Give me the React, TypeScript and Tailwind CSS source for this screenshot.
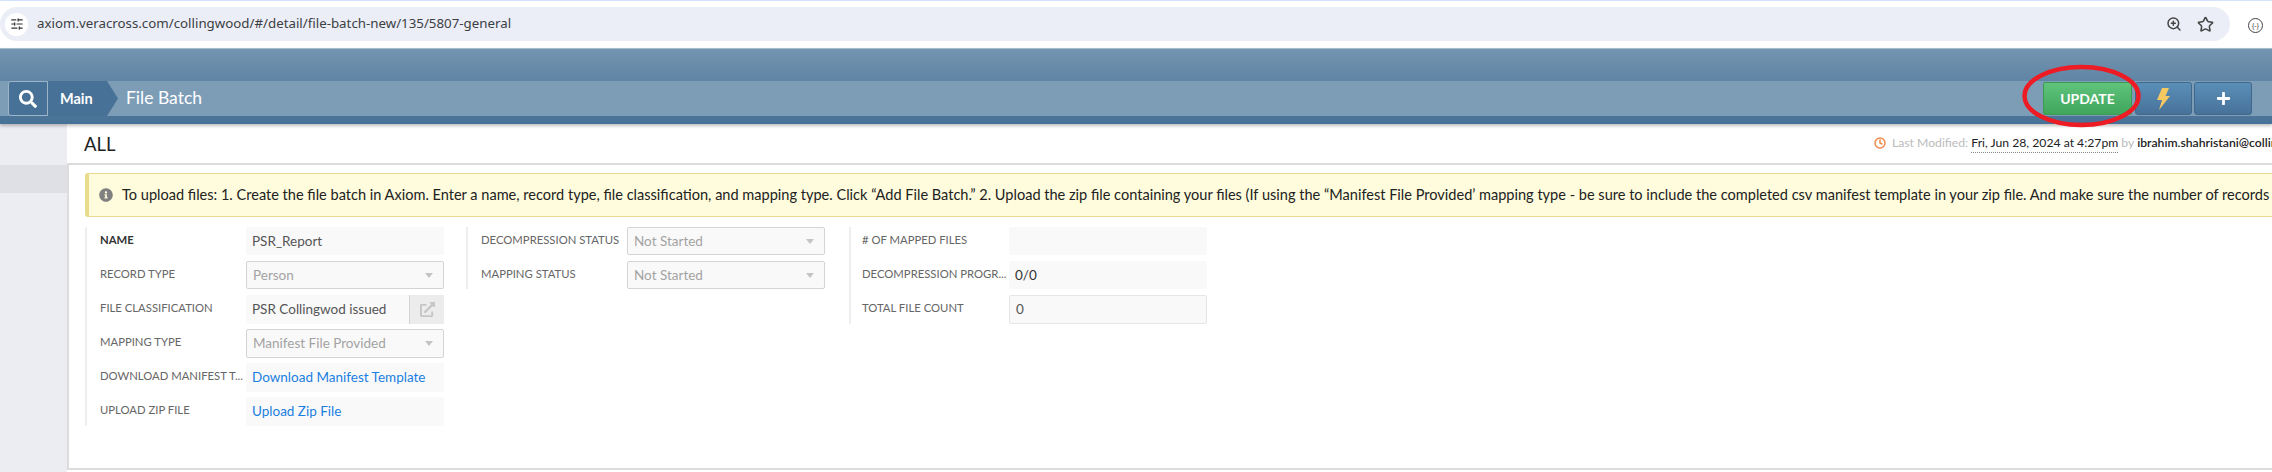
// File Batch detail page
import { Clock, Star, ZoomIn, SlidersHorizontal } from "lucide-react";
import { FaExternalLinkAlt, FaInfoCircle, FaPlus, FaSearch } from "react-icons/fa";

function Box({ children, className = "" }: { children?: React.ReactNode; className?: string }) {
  return (
    <div className={`flex h-full flex-1 items-center rounded-[2px] bg-[#f9f9f9] px-[6px] text-[13.5px] ${className}`}>
      {children}
    </div>
  );
}

function Select({ value }: { value: string }) {
  return (
    <Box className="justify-between border border-[#d4d4d4] text-[#a3a3a3]">
      <span>{value}</span>
      <span className="mr-[4px] h-0 w-0 border-x-[4px] border-t-[5px] border-x-transparent border-t-[#c4c4c4]" />
    </Box>
  );
}

function Row({ label, bold, tall, pull, wide, children }: { label: string; bold?: boolean; tall?: boolean; pull?: boolean; wide?: boolean; children: React.ReactNode }) {
  return (
    <div className={`flex items-start ${tall ? "h-[29px]" : "h-[28px]"} ${pull ? "-mt-[1px]" : ""}`}>
      <div className={`shrink-0 pt-[5px] text-[11.3px] leading-[16px] whitespace-nowrap ${wide ? "w-[147px]" : "w-[146px]"} ${bold ? "font-bold text-[#333]" : "text-[#666]"}`}>
        {label}
      </div>
      {children}
    </div>
  );
}

export default function App() {
  return (
    <div className="relative h-[472px] w-[2272px] overflow-hidden bg-white font-['Lato','Noto_Sans',sans-serif]">
      {/* Browser chrome */}
      <div className="h-[1px] bg-[#d3e3fd]" />
      <div className="flex h-[47px] items-start pt-[6px] font-['Noto_Sans',sans-serif]">
        <div className="flex h-[34px] w-[2230px] items-center rounded-full bg-[#ebeef7] pl-[5px] pr-[16px]">
          <div className="flex h-[23px] w-[23px] items-center justify-center rounded-full bg-white">
            <SlidersHorizontal className="h-[14px] w-[14px] text-[#333]" />
          </div>
          <span className="ml-[9px] flex-1 text-[13.3px] text-[#3c4043]">axiom.veracross.com/collingwood/#/detail/file-batch-new/135/5807-general</span>
          <ZoomIn className="h-[16px] w-[16px] text-[#444]" strokeWidth={2.2} />
          <Star className="ml-[15px] h-[17px] w-[17px] text-[#444]" strokeWidth={2.2} />
        </div>
        <div className="ml-[18px] mt-[11px] flex h-[15px] w-[15px] items-center justify-center rounded-full border border-[#444] text-[7px] leading-none text-[#444]">
          {"{-}"}
        </div>
      </div>

      {/* App header */}
      <div className="relative flex h-[76px] flex-col justify-end border-t border-[#a9bccb] bg-gradient-to-b from-[#7394b0] to-[#477196] pb-[8px] shadow-[0_2px_3px_rgba(0,0,0,0.25)]">
        <div className="flex h-[35px] items-center bg-[#7d9db7] pl-[8px] pr-[20px]">
          <div className="flex h-[35px] w-[40px] items-center justify-center rounded-l-[3px] border border-[#9db5c8] bg-[#477196]">
            <FaSearch className="h-[18px] w-[18px] text-white" />
          </div>
          <div className="flex h-[35px] w-[70px] items-center bg-[#477196] pl-[12px] text-[14.5px] font-bold text-white [clip-path:polygon(0_0,59px_0,100%_50%,59px_100%,0_100%)]">
            Main
          </div>
          <span className="ml-[8px] flex-1 text-[17.5px] text-white">File Batch</span>
          <button className="flex h-[33px] w-[89px] items-center justify-center rounded-[2px] border border-[#3c9a55] bg-gradient-to-b from-[#5fc37c] to-[#3fa65c] text-[14px] font-bold text-white">
            UPDATE
          </button>
          <button className="ml-[3px] flex h-[33px] w-[57px] items-center justify-center rounded-[3px] border border-[#41688a] bg-gradient-to-b from-[#5a8fb8] to-[#47729a]">
            <svg width="13" height="22" viewBox="0 0 13 22">
              <polygon points="5,0 12,0 8.5,8 13,8 2,22 5,12 0,12" fill="#f5c862" />
            </svg>
          </button>
          <button className="ml-[2px] flex h-[33px] w-[58px] items-center justify-center rounded-[3px] border border-[#41688a] bg-gradient-to-b from-[#5a8fb8] to-[#47729a]">
            <FaPlus className="h-[15px] w-[15px] text-white" />
          </button>
        </div>
      </div>

      <div className="flex h-[348px]">
        {/* Sidebar */}
        <div className="w-[67px] shrink-0 bg-[#ecedf2] pt-[41px]">
          <div className="h-[28px] bg-[#dfe0e5]" />
        </div>

        <div className="min-w-0 flex-1">
          {/* Title bar */}
          <div className="flex h-[41px] items-center justify-between border-b-[2px] border-[#dcdcdc] pl-[17px]">
            <span className="pt-[2px] text-[18.5px] text-[#222]">ALL</span>
            <div className="flex w-[398px] shrink-0 items-center overflow-hidden whitespace-nowrap text-[12.2px] text-[#bbb]">
              <Clock className="mr-[6px] h-[12px] w-[12px] shrink-0 text-[#f08a4b]" strokeWidth={3} />
              Last Modified:&nbsp;
              <span className="border-b border-dotted border-[#888] text-[#222]">Fri, Jun 28, 2024 at 4:27pm</span>
              &nbsp;by&nbsp;
              <span className="font-semibold text-[#222]">ibrahim.shahristani@collingwood.org</span>
            </div>
          </div>

          {/* Main panel */}
          <div className="h-[305px] border-b-[2px] border-l-[2px] border-[#dcdcdc] pl-[16px] pt-[8px]">
            <div className="flex h-[44px] items-center whitespace-nowrap rounded-l-[3px] border-y border-l-[4px] border-[#e8dc8c] bg-[#fefcdc] pl-[10px] text-[14.55px] text-[#222]">
              <FaInfoCircle className="mr-[9px] h-[14px] w-[14px] shrink-0 text-[#808080]" />
              To upload files: 1. Create the file batch in Axiom. Enter a name, record type, file classification, and mapping type. Click “Add File Batch.” 2. Upload the zip file containing your files (If using the “Manifest File Provided’ mapping type - be sure to include the completed csv manifest template in your zip file. And make sure the number of records
            </div>

            <div className="mt-[10px] flex items-start">
              <div className="flex w-[359px] shrink-0 flex-col gap-[6px] rounded-l-[2px] border-l-[2px] border-[#eee] pl-[13px]">
                <Row label="NAME" bold><Box className="text-[#555]">PSR_Report</Box></Row>
                <Row label="RECORD TYPE"><Select value="Person" /></Row>
                <Row label="FILE CLASSIFICATION" tall>
                  <Box className="pr-0 text-[#555]">
                    <span className="flex-1">PSR Collingwod issued</span>
                    <span className="flex h-full w-[35px] items-center justify-center border-l border-[#d4d4d4] bg-[#ececec]">
                      <FaExternalLinkAlt className="h-[15px] w-[15px] text-[#c6c6c6]" />
                    </span>
                  </Box>
                </Row>
                <Row label="MAPPING TYPE" tall pull><Select value="Manifest File Provided" /></Row>
                <Row label="DOWNLOAD MANIFEST T..." tall pull><Box className="text-[#1a7fe0]">Download Manifest Template</Box></Row>
                <Row label="UPLOAD ZIP FILE" tall pull><Box className="text-[#1a7fe0]">Upload Zip File</Box></Row>
              </div>

              <div className="ml-[22px] flex w-[359px] shrink-0 flex-col gap-[6px] border-l-[2px] border-[#eee] pl-[13px]">
                <Row label="DECOMPRESSION STATUS"><Select value="Not Started" /></Row>
                <Row label="MAPPING STATUS"><Select value="Not Started" /></Row>
              </div>

              <div className="ml-[24px] flex w-[358px] shrink-0 flex-col gap-[6px] border-l-[2px] border-[#eee] pl-[11px]">
                <Row label="# OF MAPPED FILES" wide><Box /></Row>
                <Row label="DECOMPRESSION PROGR..." wide><Box className="text-[#333]">0/0</Box></Row>
                <Row label="TOTAL FILE COUNT" wide tall><Box className="border border-[#e6e6e6] text-[#555]">0</Box></Row>
              </div>
            </div>
          </div>
        </div>
      </div>

      {/* Red annotation round the button */}
      <svg className="pointer-events-none absolute left-[2018px] top-[62px]" width="130" height="68" viewBox="0 0 130 68">
        <ellipse cx="63.5" cy="34" rx="57" ry="29" fill="none" stroke="#ed1c24" strokeWidth="4.5" />
      </svg>
    </div>
  );
}
